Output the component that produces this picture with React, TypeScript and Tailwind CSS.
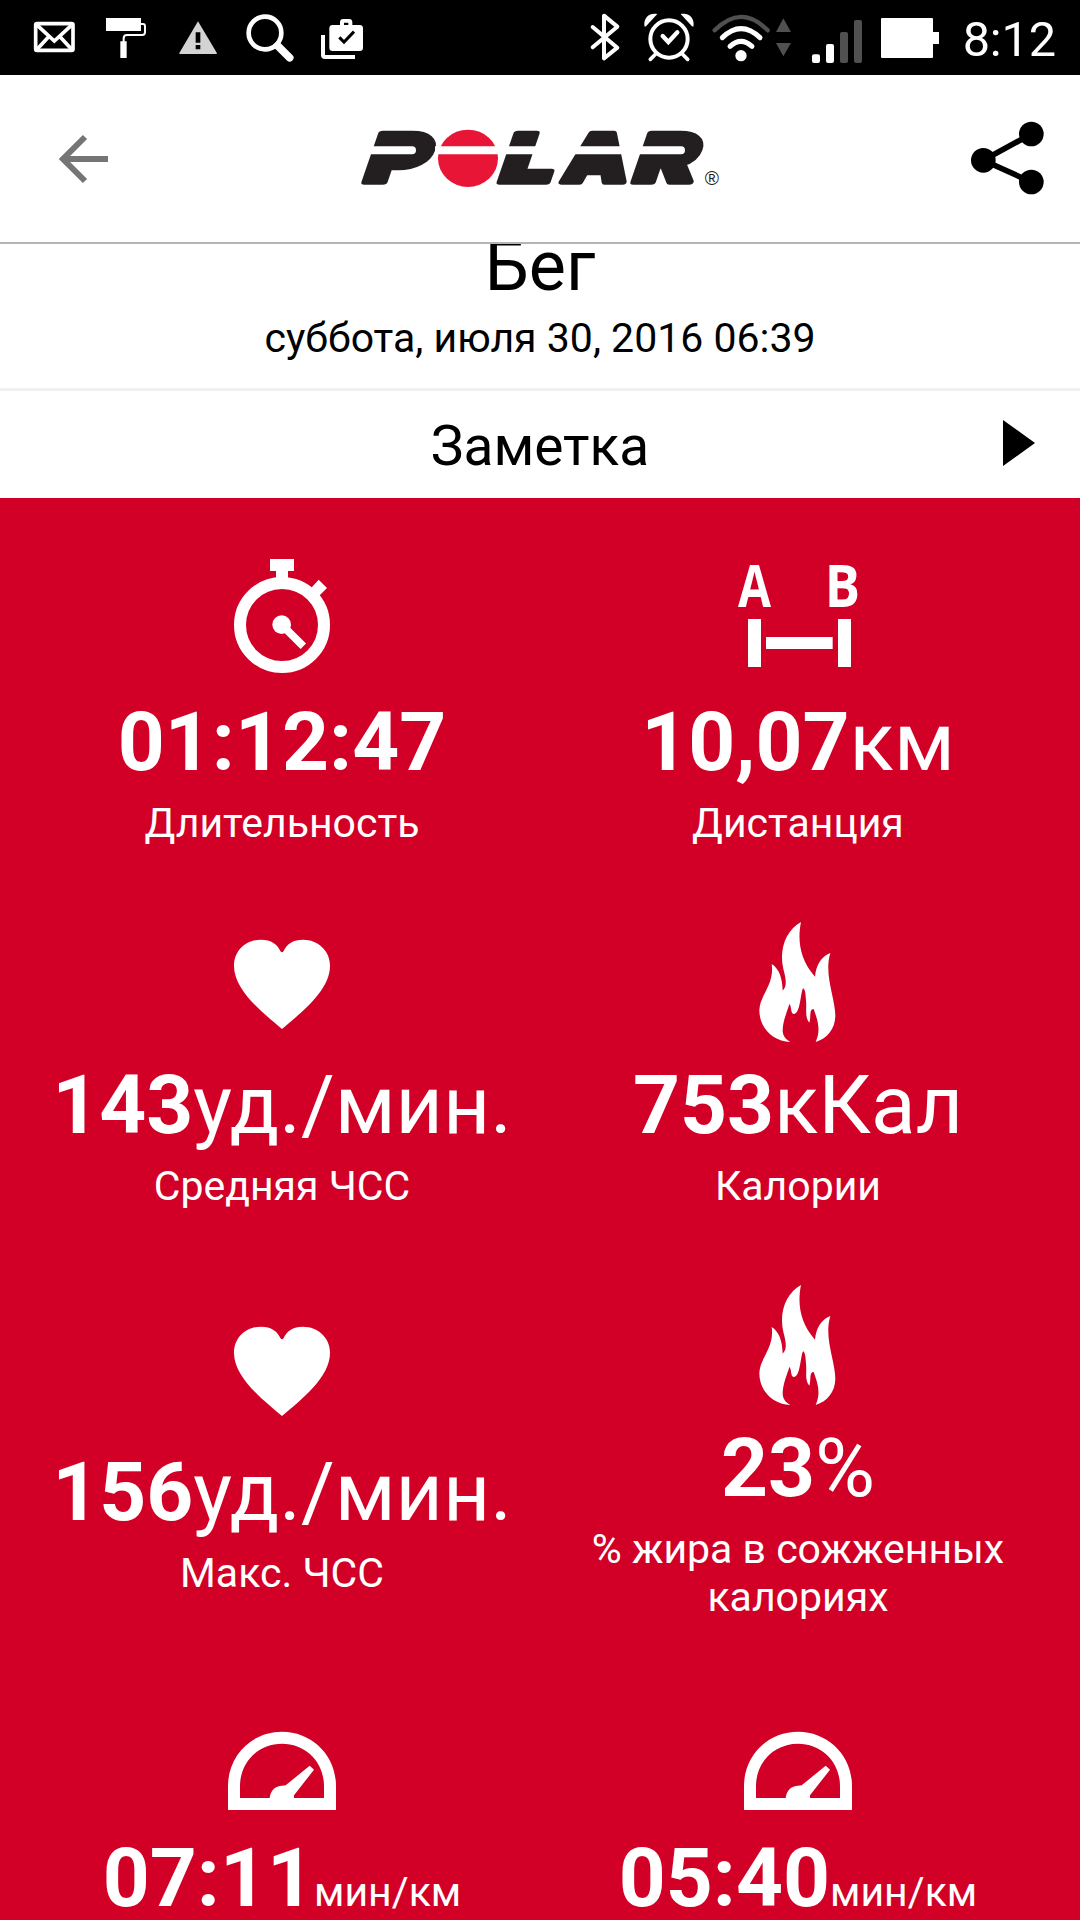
import { clsx } from 'clsx';
import type { ReactNode } from 'react';

interface Metric {
  icon: ReactNode;
  value: string;
  unit?: string;
  smallUnit?: boolean;
  label?: string;
  offset: string;
}

function StopwatchIcon() {
  return (
    <svg className="w-40 h-[150px]" viewBox="6 3 480 450" fill="#fff">
      <path d="M210 57h72v36h-18v25h-36V93h-18z" />
      <circle cx="246" cy="255" r="126" fill="none" stroke="#fff" strokeWidth="36" />
      <path d="M334 143l22-24 25 25-24 24z" />
      <circle cx="245" cy="254" r="28" />
      <path d="M245 254l65 65" stroke="#fff" strokeWidth="23" />
    </svg>
  );
}

function DistanceIcon() {
  return (
    <svg className="w-[200px] h-[150px]" viewBox="-6 3 600 450" fill="#fff">
      <g fontFamily="Open Sans" fontWeight="700" fontSize="176">
        <text x="114" y="201" textLength="99" lengthAdjust="spacingAndGlyphs">A</text>
        <text x="374" y="201" textLength="106" lengthAdjust="spacingAndGlyphs">B</text>
      </g>
      <path d="M144 237h39v144h-39zM414 237h39v144h-39zM198 291h200v36H198z" />
    </svg>
  );
}

function HeartIcon() {
  return (
    <svg className="w-40 h-[130px]" viewBox="6 -18 480 390" fill="#fff">
      <path d="M246 327C190 279 102 212 102 137C102 92 138 59 183 59C214 59 232 73 241 93Q246 101 251 93C260 73 278 59 309 59C354 59 390 92 390 137C390 212 302 279 246 327Z" />
    </svg>
  );
}

function FlameIcon() {
  return (
    <svg className="size-40" viewBox="-7 -3 480 480" fill="#fff">
      <path d="M242 66C231 120 238 178 284 230C287 195 303 170 330 159C310 225 345 293 345 348C344 386 322 415 286 426C303 388 291 359 280 327C266 327 273 348 267 368C252 350 260 327 257 302C256 285 255 268 248 265C240 281 240 343 220 342C210 340 214 318 207 312C200 337 187 363 187 393C188 410 198 419 210 426C160 424 117 386 117 330C119 284 163 254 154 192C178 207 186 237 187 272C202 258 196 233 189 207C175 147 198 90 242 66Z" />
    </svg>
  );
}

function GaugeIcon() {
  return (
    <svg className="size-40" viewBox="6 -114 480 480" fill="#fff">
      <path
        fillRule="evenodd"
        d="M84 300V228C84 136 156 65 246 65S408 136 408 228V300ZM120 264H372V228C372 156 317 101 246 101S120 156 120 228Z"
      />
      <path d="M209 268C209 242 227 227 246 227Q252 227 257 226L329 167L342 179L282 256V268Z" />
    </svg>
  );
}

const metrics: Metric[] = [
  { icon: <StopwatchIcon />, value: '01:12:47', label: 'Длительность', offset: 'pt-[42px] h-[363px]' },
  { icon: <DistanceIcon />, value: '10,07', unit: 'км', label: 'Дистанция', offset: 'pt-[42px] h-[363px]' },
  { icon: <HeartIcon />, value: '143', unit: 'уд./мин.', label: 'Средняя ЧСС', offset: 'pt-[42px] h-[363px]' },
  { icon: <FlameIcon />, value: '753', unit: 'кКал', label: 'Калории', offset: 'pt-[42px] h-[363px]' },
  { icon: <HeartIcon />, value: '156', unit: 'уд./мин.', label: 'Макс. ЧСС', offset: 'pt-[66px] h-[410px]' },
  { icon: <FlameIcon />, value: '23', unit: '%', label: '% жира в сожженных калориях', offset: 'pt-[42px] h-[410px]' },
  { icon: <GaugeIcon />, value: '07:11', unit: 'мин/км', smallUnit: true, offset: 'pt-[42px] h-[363px]' },
  { icon: <GaugeIcon />, value: '05:40', unit: 'мин/км', smallUnit: true, offset: 'pt-[42px] h-[363px]' },
];

function MetricCell({ metric }: { metric: Metric }) {
  return (
    <div className={clsx('flex flex-col items-center text-center', metric.offset)}>
      <div className="h-[151px] flex items-center justify-center">{metric.icon}</div>
      <p className="mt-[3px] h-24 text-[82px] leading-[96px] whitespace-nowrap">
        <span className="font-bold">{metric.value}</span>
        {metric.unit && <span className={clsx(metric.smallUnit && 'text-[41px]')}>{metric.unit}</span>}
      </p>
      {metric.label && <p className="pt-[9px] w-[440px] text-[41px] leading-12">{metric.label}</p>}
    </div>
  );
}

function StatusBar() {
  return (
    <div className="h-[75px] shrink-0 bg-black">
      <svg className="w-full h-[75px]" viewBox="0 0 1080 75" fill="#fff">
        <g transform="scale(.33333)">
          <rect x="107" y="71" width="112" height="80" rx="4" fill="none" stroke="#fff" strokeWidth="11" />
          <path d="M112 76L163 123L214 76M112 147L146 110M214 147L180 110" fill="none" stroke="#fff" strokeWidth="11" />
          <path d="M318 54h105v39H318zM361 124h19v50h-19z" />
          <path d="M423 72h6q6 0 6 7v18q0 8-8 8h-46q-10 0-10 10v12" fill="none" stroke="#fff" strokeWidth="6" />
          <path d="M594 64L651 160Q651 162 648 162H540Q537 162 538 159Z" fill="#d3d3d3" />
          <path d="M587 97h14v31h-14zM587 135h14v13h-14z" fill="#000" />
          <circle cx="795" cy="99" r="49" fill="none" stroke="#fff" strokeWidth="14" />
          <path d="M833 137L869 173" stroke="#fff" strokeWidth="23" strokeLinecap="round" />
          <path
            fillRule="evenodd"
            d="M998 75h22v-8q0-10 10-10h17q10 0 10 10v8h22q10 0 10 10v58q0 10-10 10h-81q-10 0-10-10V85q0-10 10-10zM1032 68v7h13v-7z"
          />
          <path d="M1018 112L1032 126L1062 95" fill="none" stroke="#000" strokeWidth="9" />
          <path d="M969 105v60q0 6 6 6h90" fill="none" stroke="#fff" strokeWidth="12" />
        </g>
        <g transform="translate(560 0) scale(.33333)">
          <path d="M98 81L172 143L132 175V47L172 80L98 142" fill="none" stroke="#fff" strokeWidth="12" strokeLinecap="round" strokeLinejoin="round" />
          <circle cx="327" cy="117" r="56" fill="none" stroke="#fff" strokeWidth="12" />
          <path d="M308 108L325 126L352 97" fill="none" stroke="#fff" strokeWidth="13" strokeLinecap="round" />
          <path d="M287 162L271 178M367 162L383 178" stroke="#fff" strokeWidth="11" strokeLinecap="round" />
          <path d="M254 80C249 58 264 37 292 42L258 79ZM400 80C405 58 390 37 362 42L396 79Z" />
          <path d="M464 91Q544 10 623 91" fill="none" stroke="#505050" strokeWidth="13" strokeLinecap="round" />
          <path d="M487 113Q543 59 600 113M510 139Q543 109 576 139" fill="none" stroke="#fff" strokeWidth="15" strokeLinecap="round" />
          <circle cx="543" cy="167" r="17" />
          <path d="M670 55L693 96H648zM648 129H693L670 169z" fill="#505050" />
          <rect x="756" y="163" width="24" height="26" rx="6" />
          <rect x="798" y="132" width="24" height="57" rx="6" />
          <rect x="840" y="96" width="24" height="93" rx="6" fill="#505050" />
          <rect x="882" y="60" width="24" height="129" rx="6" fill="#505050" />
          <path d="M966 54h150q3 0 3 3v39h18v36h-18v39q0 3-3 3H966q-3 0-3-3V57q0-3 3-3z" />
          <text x="1208" y="168" fontFamily="Roboto" fontSize="146" textLength="280" lengthAdjust="spacing">8:12</text>
        </g>
      </svg>
    </div>
  );
}

function PolarLogo() {
  return (
    <svg className="w-[400px] h-[100px]" viewBox="0 0 1200 300">
      <g
        fontFamily="Inter"
        fontWeight="900"
        fontSize="200"
        fill="#231f20"
        stroke="#231f20"
        strokeWidth="16"
        strokeLinejoin="round"
      >
        <text transform="translate(62 217) skewX(-19) scale(1.42 1)">P</text>
        <text transform="translate(468 217) skewX(-19) scale(1.42 1)">L</text>
        <text transform="translate(660 217) skewX(-12) scale(1.23 1)">A</text>
        <text transform="translate(869 217) skewX(-19) scale(1.38 1)">R</text>
      </g>
      <path d="M140 85h100v75H140zM945 85h100v70H945zM765 100h65v74h-90z" fill="#231f20" />
      <ellipse cx="384" cy="145" rx="90" ry="86" fill="#e91537" />
      <path
        d="M60 109H216a12 12 0 0 1 0 24H60zM285 109H860V133H285zM860 109H1023a12 12 0 0 1 0 24H860z"
        fill="#fff"
      />
      <text x="1094" y="224" fontFamily="Liberation Sans" fontSize="58" fill="#231f20">®</text>
    </svg>
  );
}

export default function App() {
  return (
    <div className="w-[1080px] h-[1920px] flex flex-col overflow-hidden bg-white font-[Roboto,sans-serif] text-black">
      <StatusBar />

      <header className="h-[169px] shrink-0 pt-[3px] flex items-center justify-between border-b-2 border-[#b5b5b5]">
        <button className="w-[140px] pl-[58px] pb-[3px]">
          <svg className="w-[52px] h-[50px]" viewBox="0 0 52 50" fill="none" stroke="#757575" strokeWidth="6">
            <path d="M50 25H6M27 3L5 25L27 47" />
          </svg>
        </button>
        <PolarLogo />
        <button className="w-[140px]">
          <svg className="w-[140px] h-[120px]" viewBox="0 0 420 360">
            <path d="M274 102L130 181L274 246" fill="none" stroke="#000" strokeWidth="17" />
            <circle cx="274" cy="102" r="37" />
            <circle cx="130" cy="181" r="37" />
            <circle cx="274" cy="246" r="37" />
          </svg>
        </button>
      </header>

      <section className="h-[147px] shrink-0 flex flex-col items-center overflow-hidden border-b-3 border-[#f0f0f0]">
        <h1 className="-mt-[18px] text-[70px] leading-20">Бег</h1>
        <p className="mt-2 text-[41px] leading-12">суббота, июля 30, 2016 06:39</p>
      </section>

      <section className="h-[107px] shrink-0 grid grid-cols-[1fr_auto_1fr] items-center">
        <span />
        <h2 className="pt-0.5 text-[55px] leading-16">Заметка</h2>
        <svg className="w-8 h-[46px] mr-[45px] mb-1 justify-self-end" viewBox="0 0 32 46">
          <path d="M0 0L32 23L0 46z" />
        </svg>
      </section>

      <main className="h-[1422px] shrink-0 px-6 grid grid-cols-2 content-start overflow-hidden bg-[#d20026] text-white">
        {metrics.map((metric, i) => (
          <MetricCell key={i} metric={metric} />
        ))}
      </main>
    </div>
  );
}
